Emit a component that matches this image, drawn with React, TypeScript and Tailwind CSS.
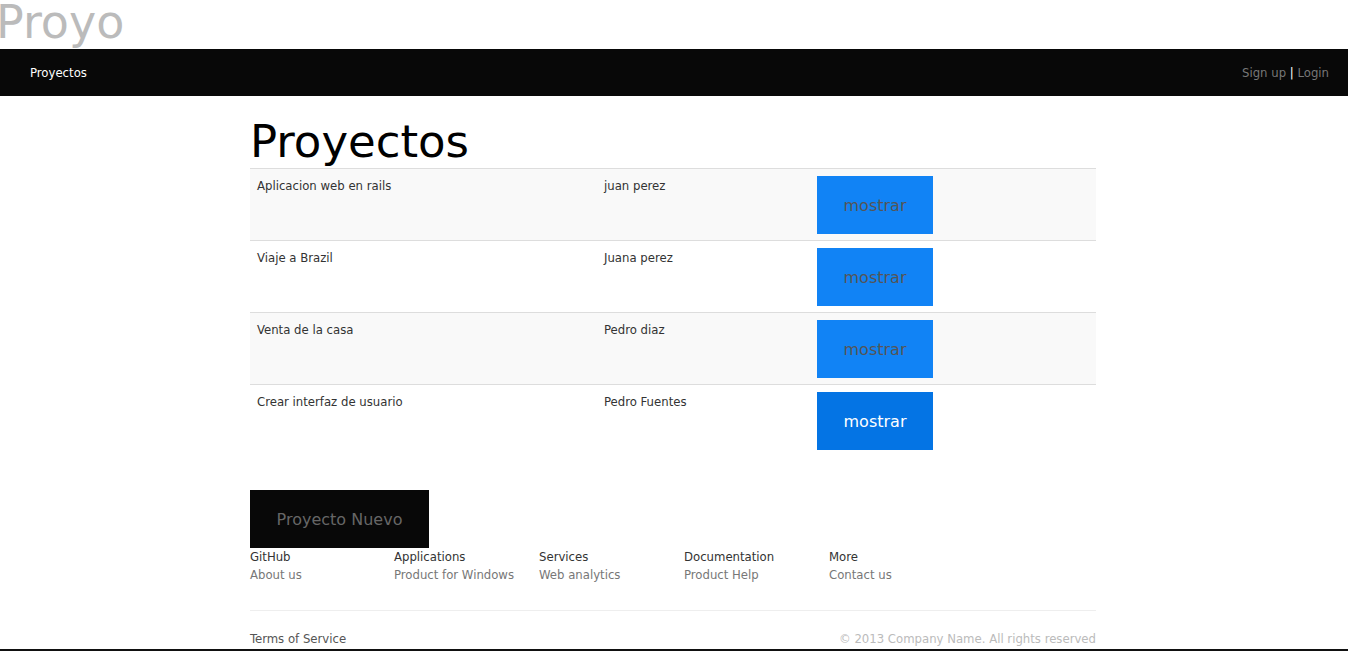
import React from "react";

const rows = [
  { name: "Aplicacion web en rails", owner: "juan perez" },
  { name: "Viaje a Brazil", owner: "Juana perez" },
  { name: "Venta de la casa", owner: "Pedro diaz" },
  { name: "Crear interfaz de usuario", owner: "Pedro Fuentes" },
];

const cols = [
  ["GitHub", "About us", "w-[144px]"],
  ["Applications", "Product for Windows", "w-[145px]"],
  ["Services", "Web analytics", "w-[145px]"],
  ["Documentation", "Product Help", "w-[145px]"],
  ["More", "Contact us", "w-[145px]"],
];

const sans = { fontFamily: '"DejaVu Sans", Verdana, sans-serif' };

export default function App() {
  return (
    <div
      className="min-h-[651px] bg-white text-[13px] text-[#333]"
      style={{ fontFamily: '"DejaVu Sans Condensed", "DejaVu Sans", sans-serif' }}
    >
      <div className="h-[49px]" style={sans}>
        <div className="ml-[-4px] text-[46px] leading-[45px] text-[#bbbbbb]">Proyo</div>
      </div>
      <nav className="flex h-[47px] items-center justify-between bg-[#080808] pl-[30px] pr-[19px]">
        <span className="text-white">Proyectos</span>
        <span className="text-[#777]">
          Sign up <span className="text-white">|</span> Login
        </span>
      </nav>
      <div className="flex justify-center pr-[2px]">
        <main className="w-[846px]">
          <h1 className="mt-[20px] text-[45px] leading-[52px] text-black" style={sans}>
            Proyectos
          </h1>
          <div>
            {rows.map((r, i) => (
              <div
                key={i}
                className={`grid h-[72px] grid-cols-[347px_213px_1fr] border-t border-[#dddddd] pt-[7px] leading-[20px] ${
                  i % 2 === 0 ? "bg-[#f9f9f9]" : "bg-white"
                }`}
              >
                <div className="px-[7px]">{r.name}</div>
                <div className="px-[7px]">{r.owner}</div>
                <div className="px-[7px]">
                  <button
                    style={sans}
                    className={`flex h-[58px] w-[116px] items-center justify-center pt-[2px] text-[16px] ${
                      i === 3 ? "bg-[#0474e4] text-white" : "bg-[#1183f5] text-[#555]"
                    }`}
                  >
                    mostrar
                  </button>
                </div>
              </div>
            ))}
          </div>
          <button
            style={sans}
            className="mt-[34px] flex h-[58px] w-[179px] items-center justify-center pt-[2px] bg-[#080808] text-[16px] text-[#666]"
          >
            Proyecto Nuevo
          </button>
          <div className="flex leading-[18px]">
            {cols.map(([t, l, w]) => (
              <div key={t} className={w}>
                <div className="text-[#333]">{t}</div>
                <div className="text-[#777]">{l}</div>
              </div>
            ))}
          </div>
          <div className="mt-[26px] border-t border-[#eeeeee]" />
          <div className="mt-[19px] flex justify-between leading-[18px]">
            <span className="text-[#555]">Terms of Service</span>
            <span className="text-[#bbbbbb]">© 2013 Company Name. All rights reserved</span>
          </div>
        </main>
      </div>
      <div className="mt-[1px] h-[4px] bg-[#111]" />
    </div>
  );
}
